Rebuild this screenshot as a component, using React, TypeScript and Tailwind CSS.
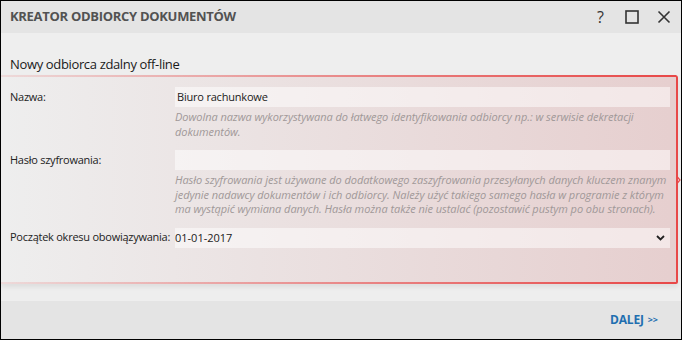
import React from "react";

const Field = ({
  label,
  children,
  help,
}: {
  label: string;
  children: React.ReactNode;
  help?: string[];
}) => (
  <>
    <div className="flex items-center h-[20px] text-[11px] tracking-[-0.25px] text-[#222] whitespace-nowrap">{label}</div>
    <div className="h-[20px] min-w-0">{children}</div>
    {help && (
      <>
        <div />
        <div className="mt-[3px] text-[11px] tracking-[-0.05px] leading-[14.5px] italic text-[#a09898] min-w-0">
          {help.map((l, i) => (
            <div key={i} className="whitespace-nowrap">
              {l}
            </div>
          ))}
        </div>
      </>
    )}
  </>
);

export default function App() {
  return (
    <div
      className="w-[682px] h-[340px] border border-black flex flex-col bg-[#eeeeee] overflow-hidden"
      style={{ fontFamily: '"Open Sans", "Noto Sans", sans-serif' }}
    >
      {/* Title bar */}
      <div className="h-[32px] bg-[#e4e4e4] flex items-center justify-between pl-[9px] pr-[10px] shrink-0">
        <div className="text-[13px] font-bold tracking-[-0.3px] text-[#525252]">KREATOR ODBIORCY DOKUMENTÓW</div>
        <div className="flex items-center gap-[18px] text-[#333]">
          <span className="text-[16px] font-normal leading-none mr-[3px]">?</span>
          <svg width="14" height="14" viewBox="0 0 14 14">
            <rect x="1" y="1" width="12" height="12" fill="none" stroke="#333" strokeWidth="1.6" />
          </svg>
          <svg width="14" height="14" viewBox="0 0 14 14">
            <path d="M1.5 1.5 L12.5 12.5 M12.5 1.5 L1.5 12.5" stroke="#333" strokeWidth="1.6" />
          </svg>
        </div>
      </div>

      {/* Content */}
      <div className="flex-1 flex flex-col">
        <div className="h-[42px] pt-[21px] pl-[9px] text-[13px] tracking-[-0.35px] leading-[20px] text-[#1a1a1a]">
          Nowy odbiorca zdalny off-line
        </div>
        <div className="relative mr-[3px] h-[209px] flex flex-col border-r-2 border-[#e84848] rounded-tr-[3px] rounded-br-[2px] bg-[linear-gradient(to_right,rgba(200,90,90,0.0),rgba(200,90,90,0.21))] shadow-[0_3px_5px_rgba(0,0,0,0.07)]">
          <div className="h-[2px] bg-[linear-gradient(to_right,rgba(232,72,72,0.12),rgba(232,72,72,1))] shrink-0" />
          <div className="flex-1 grid grid-cols-[165px_minmax(0,1fr)] content-start pl-[9px] pr-[6px] pt-[10px] gap-y-0">
            <Field
              label="Nazwa:"
              help={[
                "Dowolna nazwa wykorzystywana do łatwego identyfikowania odbiorcy np.: w serwisie dekretacji",
                "dokumentów.",
              ]}
            >
              <div className="h-full bg-white/50 text-[11px] tracking-[-0.2px] leading-[20px] pl-[2px] text-[#1a1a1a]">Biuro rachunkowe</div>
            </Field>
            <div className="col-span-2 h-[11px]" />
            <Field
              label="Hasło szyfrowania:"
              help={[
                "Hasło szyfrowania jest używane do dodatkowego zaszyfrowania przesyłanych danych kluczem znanym",
                "jedynie nadawcy dokumentów i ich odbiorcy. Należy użyć takiego samego hasła w programie z którym",
                "ma wystąpić wymiana danych. Hasła można także nie ustalać (pozostawić pustym po obu stronach).",
              ]}
            >
              <div className="h-full bg-white/50" />
            </Field>
            <div className="col-span-2 h-[11px]" />
            <Field label="Początek okresu obowiązywania:">
              <div className="h-full bg-white/50 text-[11px] leading-[20px] text-[#1a1a1a] flex items-center justify-between pr-[5px]">
                <span>01-01-2017</span>
                <svg width="9" height="6" viewBox="0 0 9 6">
                  <path d="M1 1 L4.5 4.5 L8 1" fill="none" stroke="#222" strokeWidth="1.8" />
                </svg>
              </div>
            </Field>
          </div>
          <div className="h-[2px] bg-[linear-gradient(to_right,rgba(232,72,72,0.12),rgba(232,72,72,1))] shrink-0" />
          <svg className="absolute right-[-5px] top-[101px]" width="4" height="8" viewBox="0 0 4 8">
            <path d="M0 0.5 L3 4 L0 7.5" fill="none" stroke="#e84848" strokeWidth="1.2" />
          </svg>
        </div>
        <div className="flex-1" />
      </div>

      {/* Footer */}
      <div className="h-[38px] bg-[#e4e4e4] flex items-center justify-end pr-[23px] shrink-0">
        <span className="text-[12px] font-bold tracking-[-0.2px] text-[#1f6fb0]">DALEJ</span>
        <span className="ml-[4px] text-[9px] font-bold text-[#1f6fb0]">&gt;&gt;</span>
      </div>
    </div>
  );
}
